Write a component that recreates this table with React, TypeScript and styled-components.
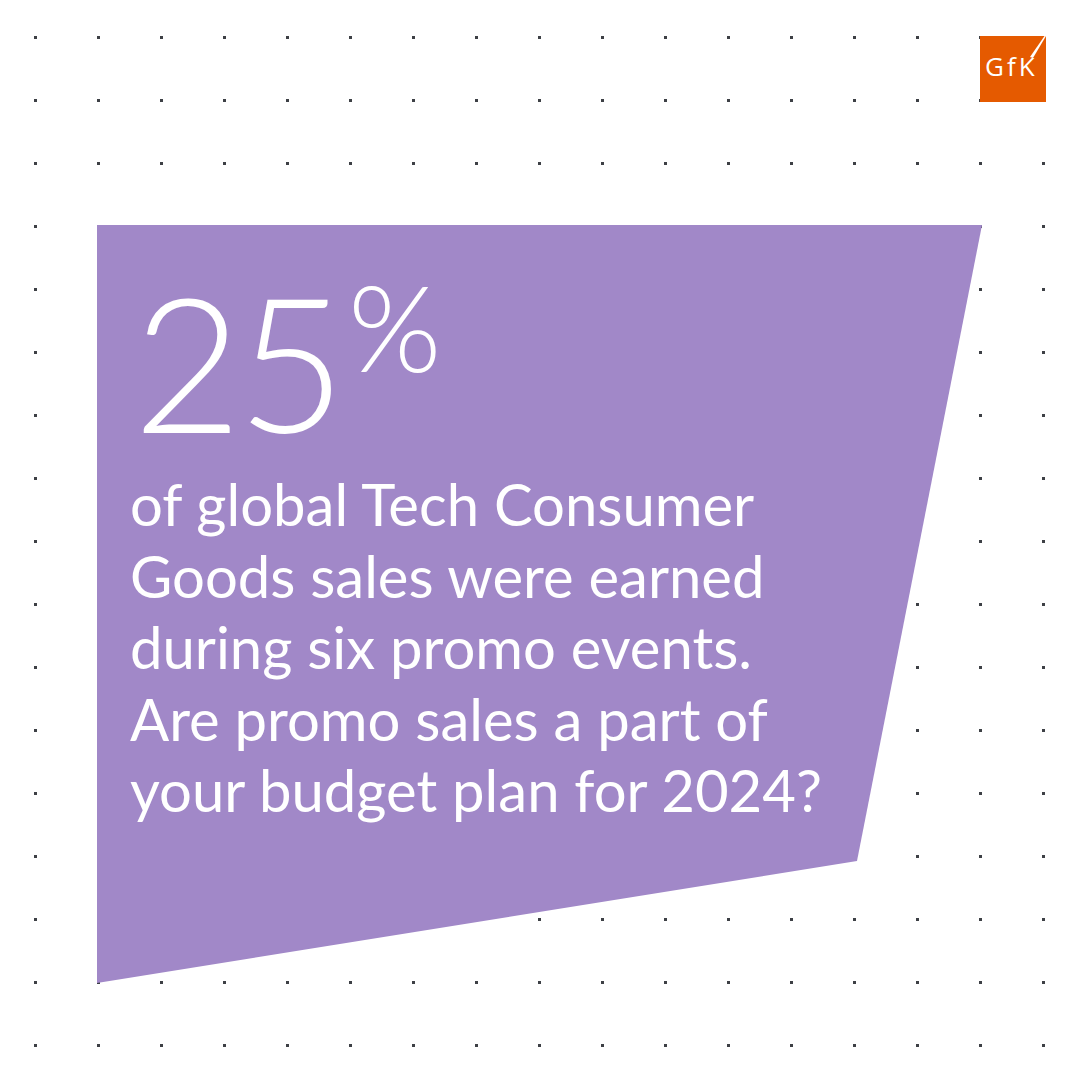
import styled, { createGlobalStyle } from "styled-components";

const GlobalStyle = createGlobalStyle`
  html, body {
    margin: 0;
    padding: 0;
    background: #ffffff;
  }
  body {
    font-family: Lato, "Noto Sans", "Liberation Sans", sans-serif;
  }
`;

const Page = styled.div`
  width: 1080px;
  height: 1080px;
  overflow: hidden;
  display: flex;
  flex-direction: column;
  background-color: #ffffff;
  background-image: conic-gradient(
    from 270deg at 3px 3px,
    #3d4045 25%,
    transparent 0
  );
  background-size: 63px 63px;
  background-position: 34px 36px;
`;

const Header = styled.header`
  display: flex;
  justify-content: flex-end;
  padding: 36px 34px 0 0;
`;

const Card = styled.section`
  margin: 123px 0 0 97px;
  width: 885px;
  height: 758px;
  box-sizing: border-box;
  padding: 41px 0 0 33px;
  background: #a188c8;
  clip-path: polygon(0 0, 885px 0, 760px 636px, 0 758px);
  color: #ffffff;
  display: flex;
  flex-direction: column;
  gap: 14px;
`;

const Figure = styled.div`
  display: flex;
  align-items: flex-start;
  font-weight: 300;
  line-height: 1;
  padding-left: 3px;
`;

const Number = styled.span`
  font-size: 188px;
  letter-spacing: -5px;
`;

const Percent = styled.span`
  font-size: 120px;
  margin-left: 7px;
`;

const Statement = styled.p`
  margin: 0;
  font-size: 58px;
  font-weight: 400;
  line-height: 71.5px;
`;

function GfkLogo() {
  return (
    <svg width="66" height="66" viewBox="0 0 66 66" aria-label="GfK">
      <rect width="66" height="66" fill="#e55a00" />
      <text
        x="5"
        y="40"
        fill="#ffffff"
        fontFamily="'Open Sans', 'DejaVu Sans', sans-serif"
        fontSize="26"
        letterSpacing="3"
      >
        GfK
      </text>
      <polygon points="50,21 53,22 66,0 64.5,0" fill="#ffffff" />
    </svg>
  );
}

export default function App() {
  return (
    <>
      <GlobalStyle />
      <Page>
        <Header>
          <GfkLogo />
        </Header>
        <Card>
          <Figure>
            <Number>25</Number>
            <Percent>%</Percent>
          </Figure>
          <Statement>
            of global Tech Consumer
            <br />
            Goods sales were earned
            <br />
            during six promo events.
            <br />
            Are promo sales a part of
            <br />
            your budget plan for 2024?
          </Statement>
        </Card>
      </Page>
    </>
  );
}
